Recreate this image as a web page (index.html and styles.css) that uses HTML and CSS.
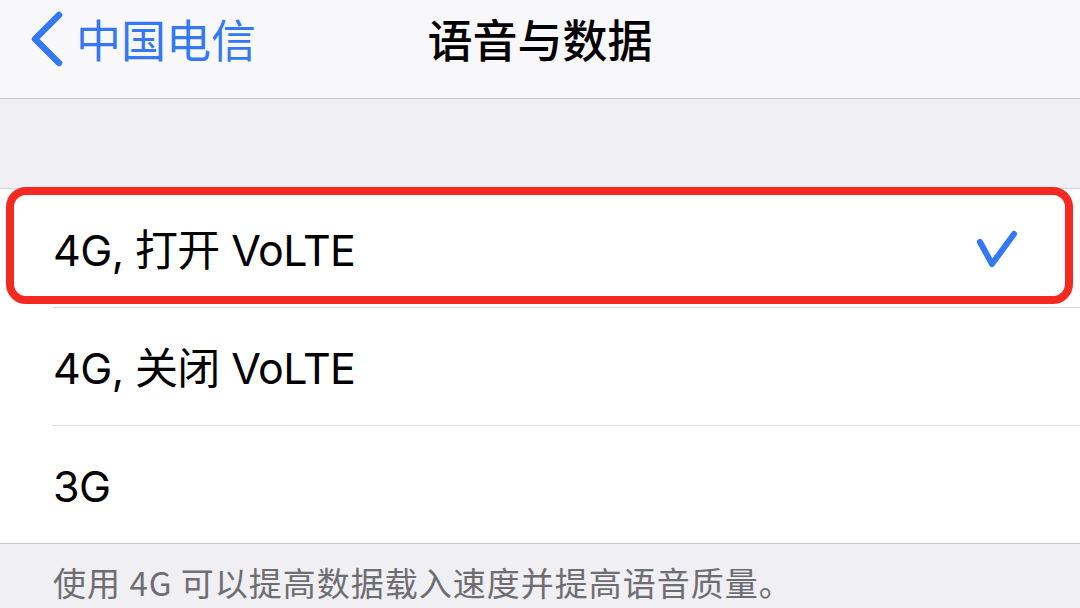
FILE: index.html
```html
<!DOCTYPE html>
<html lang="zh-CN">
<head>
<meta charset="utf-8">
<title>语音与数据</title>
<link rel="stylesheet" href="styles.css">
</head>
<body>
<div class="screen">
  <header class="nav">
    <div class="nav-back">
      <svg class="chevron" width="40" height="60" viewBox="0 0 40 60">
        <path d="M29 4 L5 28 L29 52" fill="none" stroke="#3478f6" stroke-width="6.5" stroke-linecap="round" stroke-linejoin="round"/>
      </svg>
      <span class="back-label">中国电信</span>
    </div>
    <h1 class="nav-title">语音与数据</h1>
    <div class="nav-spacer"></div>
  </header>
  <div class="group-gap"></div>
  <ul class="list">
    <li class="row row-selected">
      <span class="row-label">4G, 打开 VoLTE</span>
      <svg class="check" width="44" height="44" viewBox="0 0 44 44">
        <path d="M6 15 L18 37 L40 7" fill="none" stroke="#3478f6" stroke-width="6" stroke-linecap="round" stroke-linejoin="round"/>
      </svg>
      <div class="highlight"></div>
    </li>
    <li class="row">
      <span class="row-label">4G, 关闭 VoLTE</span>
    </li>
    <li class="row">
      <span class="row-label">3G</span>
    </li>
  </ul>
  <p class="footer">使用 4G 可以提高数据载入速度并提高语音质量。</p>
</div>
</body>
</html>
```

FILE: styles.css
```css
* { box-sizing: border-box; }
html, body {
  margin: 0;
  padding: 0;
  background: #efeff4;
}
body {
  width: 1080px;
  height: 608px;
  overflow: hidden;
  font-family: Inter, "Noto Sans CJK SC", sans-serif;
}
.screen {
  display: flex;
  flex-direction: column;
}
.nav {
  height: 99px;
  background: #f8f8fa;
  border-bottom: 1px solid #c6c6ca;
  display: grid;
  grid-template-columns: 1fr auto 1fr;
  align-items: center;
  padding-bottom: 22px;
}
.nav-back {
  display: flex;
  align-items: center;
  padding-left: 30px;
  gap: 6px;
  color: #3478f6;
}
.chevron { display: block; margin-top: 6px; }
.back-label {
  font-family: "Noto Sans CJK SC", sans-serif;
  font-size: 45px;
  line-height: 1;
}
.nav-title {
  margin: 0;
  font-family: "Noto Sans CJK SC", sans-serif;
  font-size: 45px;
  font-weight: 500;
  line-height: 1;
  color: #000;
}
.group-gap {
  height: 89px;
}
.list {
  list-style: none;
  margin: 0;
  padding: 0;
  background: #fff;
  border-top: 1px solid #d6d6da;
  border-bottom: 1px solid #c8c8cc;
}
.row {
  position: relative;
  height: 118px;
  display: flex;
  align-items: center;
  justify-content: space-between;
  padding-left: 53px;
  padding-right: 62px;
}
.row + .row::before {
  content: "";
  position: absolute;
  left: 52px;
  right: 0;
  top: 0;
  height: 1px;
  background: #dcdce0;
}
.row-label {
  font-size: 43px;
  color: #000;
  line-height: 1;
  margin-top: 4px;
  letter-spacing: -0.6px;
}
.check { display: block; margin-top: 2px; }
.highlight {
  position: absolute;
  left: 6px;
  right: 7px;
  top: -2px;
  bottom: 3px;
  border: 8px solid #f42a22;
  border-radius: 20px;
  pointer-events: none;
}
.footer {
  margin: 0;
  padding: 18px 0 0 53px;
  font-family: "Noto Sans CJK SC", sans-serif;
  font-size: 33px;
  line-height: 40px;
  letter-spacing: 1px;
  color: #6d6d72;
}
```
